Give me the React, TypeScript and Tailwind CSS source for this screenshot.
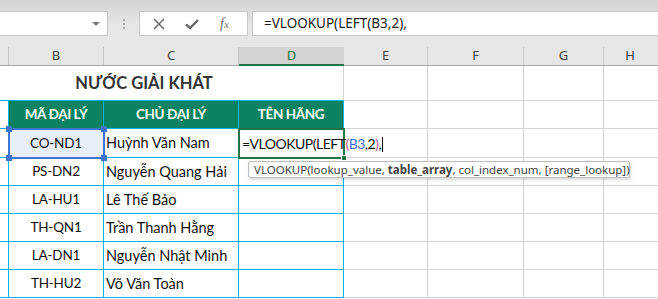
import React from "react";

const cellFont = { fontFamily: "Lato, 'Noto Sans', sans-serif" };
const uiFont = { fontFamily: "'Noto Sans', 'Open Sans', sans-serif" };

const rows = [
  ["CO-ND1", "Huỳnh Văn Nam"],
  ["PS-DN2", "Nguyễn Quang Hải"],
  ["LA-HU1", "Lê Thế Bảo"],
  ["TH-QN1", "Trần Thanh Hằng"],
  ["LA-DN1", "Nguyễn Nhật Minh"],
  ["TH-HU2", "Võ Văn Toàn"],
];
const rowH = ["h-[29px]", "h-[28px]", "h-[28px]", "h-[28px]", "h-[28px]", "h-[28px]"];

function GrayCells() {
  return (
    <>
      <div className="w-[84px] shrink-0 border-r border-b border-[#d4d4d4]" />
      <div className="w-[96px] shrink-0 border-r border-b border-[#d4d4d4]" />
      <div className="w-[80px] shrink-0 border-r border-b border-[#d4d4d4]" />
      <div className="flex-1 border-b border-[#d4d4d4]" />
    </>
  );
}

export default function App() {
  return (
    <div className="relative w-[658px] h-[299px] overflow-hidden bg-white" style={cellFont}>
      {/* Formula bar area */}
      <div className="h-[47px] bg-[#e6e6e6] bg-gradient-to-b from-[#d3d3d3] via-[#e6e6e6] to-[#e6e6e6] flex items-start pt-[11px]">
        <div className="w-[108px] h-[25px] bg-white border border-[#c6c6c6] border-l-0 flex items-center justify-end pr-[7px]">
          <div className="w-0 h-0 border-l-[4px] border-r-[4px] border-t-[4px] border-l-transparent border-r-transparent border-t-[#7a7a7a]" />
        </div>
        <div className="w-[31px] h-[25px] flex flex-col items-center justify-center gap-[2px]">
          <div className="w-[2px] h-[2px] bg-[#a8a8a8]" />
          <div className="w-[2px] h-[2px] bg-[#a8a8a8]" />
          <div className="w-[2px] h-[2px] bg-[#a8a8a8]" />
        </div>
        <div className="w-[109px] h-[25px] bg-white border border-[#c6c6c6] flex items-center pl-[12px] gap-[18px]">
          <svg width="14" height="14" viewBox="0 0 14 14">
            <path d="M2 2 L12 12 M12 2 L2 12" stroke="#6b6b6b" strokeWidth="1.5" fill="none" />
          </svg>
          <svg width="16" height="14" viewBox="0 0 16 14">
            <path d="M2 7.5 L6 11 L14 3" stroke="#6b6b6b" strokeWidth="2.4" fill="none" />
          </svg>
          <span className="text-[14px] italic text-[#6b6b6b] leading-none ml-[2px]" style={{ fontFamily: "'Liberation Serif', serif" }}>
            f<span className="text-[11px]">x</span>
          </span>
        </div>
        <div className="ml-[4px] flex-1 h-[25px] bg-white border border-[#c6c6c6] border-r-0 flex items-center pl-[11px] text-[13.5px] text-[#222]" style={uiFont}>
          =VLOOKUP(LEFT(B3,2),
        </div>
      </div>

      {/* Column headers */}
      <div className="h-[19px] flex bg-[#e6e6e6] border-b border-[#a9a9a9] text-[13px] text-[#444]" style={uiFont}>
        <div className="w-[9px] shrink-0 border-r border-[#c8c8c8]" />
        <div className="w-[95px] shrink-0 border-r border-[#c8c8c8] flex items-center justify-center">B</div>
        <div className="w-[135px] shrink-0 border-r border-[#c8c8c8] flex items-center justify-center">C</div>
        <div className="w-[105px] shrink-0 bg-[#d2d2d2] border-b-2 border-[#217346] -mb-px flex items-center justify-center text-[#217346]">D</div>
        <div className="w-[84px] shrink-0 border-r border-[#c8c8c8] flex items-center justify-center">E</div>
        <div className="w-[96px] shrink-0 border-r border-[#c8c8c8] flex items-center justify-center">F</div>
        <div className="w-[80px] shrink-0 border-r border-[#c8c8c8] flex items-center justify-center">G</div>
        <div className="flex-1 flex items-center justify-center pr-[2px]">H</div>
      </div>

      {/* Title row */}
      <div className="h-[35px] flex">
        <div className="w-[9px] shrink-0 border-b border-[#00b0f0]" />
        <div className="w-[335px] shrink-0 border-r border-[#d4d4d4] border-b border-b-[#00b0f0] flex items-center justify-center pr-[64px] text-[16.5px] font-bold text-[#333]">
          NƯỚC GIẢI KHÁT
        </div>
        <GrayCells />
      </div>

      {/* Header row */}
      <div className="h-[28px] flex text-white font-bold text-[13.5px] tracking-[-0.4px]">
        <div className="w-[9px] shrink-0 border-r border-b border-[#00b0f0]" />
        <div className="w-[95px] shrink-0 bg-[#0b8262] border-r border-b border-[#00b0f0] flex items-center justify-center">MÃ ĐẠI LÝ</div>
        <div className="w-[135px] shrink-0 bg-[#0b8262] border-r border-b border-[#00b0f0] flex items-center justify-center">CHỦ ĐẠI LÝ</div>
        <div className="w-[105px] shrink-0 bg-[#0b8262] border-r border-b border-[#00b0f0] flex items-center justify-center">TÊN HÃNG</div>
        <GrayCells />
      </div>

      {/* Data rows */}
      {rows.map((r, i) => (
        <div key={i} className={`${rowH[i]} flex text-[#111]`}>
          <div className="w-[9px] shrink-0 border-r border-b border-[#00b0f0]" />
          <div className={`w-[95px] shrink-0 border-r border-b border-[#00b0f0] flex items-center justify-center text-[13.5px] tracking-[-0.2px] ${i === 0 ? "bg-[#e8eef8]" : ""}`}>{r[0]}</div>
          <div className="w-[135px] shrink-0 border-r border-b border-[#00b0f0] flex items-center pl-[2px] text-[14.5px]">{r[1]}</div>
          <div className="w-[105px] shrink-0 border-r border-b border-[#00b0f0] flex items-center pl-[3px] whitespace-nowrap text-[14px] tracking-[-0.5px]">
            {i === 0 ? (
              <span className="relative z-10">
                =VLOOKUP(LEFT<span className="text-[#c8519b]">(</span>
                <span className="text-[#3a6fd8]">B3</span>,2<span className="text-[#c8519b]">)</span>,
                <span className="inline-block w-px h-[15px] bg-black align-middle ml-[1px]" />
              </span>
            ) : null}
          </div>
          <GrayCells />
        </div>
      ))}

      {/* B3 reference selection */}
      <div className="absolute left-[8px] top-[128px] w-[97px] h-[31px] border-2 border-[#3c74d0] pointer-events-none">
        <div className="absolute -left-[4px] -top-[4px] w-[6px] h-[6px] bg-[#3c74d0]" />
        <div className="absolute -right-[4px] -top-[4px] w-[6px] h-[6px] bg-[#3c74d0]" />
        <div className="absolute -left-[4px] -bottom-[4px] w-[6px] h-[6px] bg-[#3c74d0]" />
        <div className="absolute -right-[4px] -bottom-[4px] w-[6px] h-[6px] bg-[#3c74d0]" />
      </div>

      {/* D3 active cell */}
      <div className="absolute left-[238px] top-[128px] w-[107px] h-[31px] border-2 border-[#217346] pointer-events-none">
        <div className="absolute -right-[4px] -bottom-[4px] w-[6px] h-[6px] bg-[#217346] border border-white" />
      </div>

      {/* Function tooltip */}
      <div className="absolute left-[248px] top-[161px] w-[382px] h-[17px] bg-white border border-[#bdbdbd] rounded-[2px] shadow-[1px_2px_3px_rgba(0,0,0,0.15)] flex items-center pl-[5px] text-[11.5px] text-[#444] whitespace-nowrap" style={uiFont}>
        VLOOKUP(lookup_value,&nbsp;<span className="font-bold">table_array</span>, col_index_num, [range_lookup])
      </div>
    </div>
  );
}
